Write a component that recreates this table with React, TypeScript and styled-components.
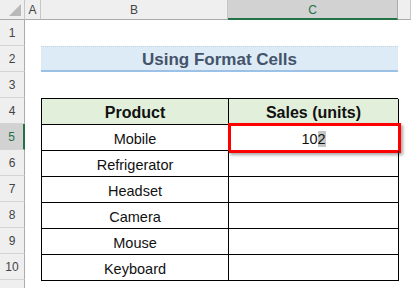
import React from 'react'
import styled, { createGlobalStyle, css } from 'styled-components'

const GlobalStyle = createGlobalStyle`
    html, body {
        margin: 0;
        padding: 0;
        background: #fff;
        overflow: hidden;
    }
    body {
        font-family: 'Liberation Sans', Arial, sans-serif;
    }
`

const ROW_H = 26
const COLS = ['A', 'B', 'C', 'D']
const ROWS = [1, 2, 3, 4, 5, 6, 7, 8, 9, 10, 11]

const Sheet = styled.div`
    display: grid;
    grid-template-columns: 25px 16px 187px 170px 13px;
    grid-template-rows: 20px repeat(11, ${ROW_H}px);
    width: 411px;
    height: 288px;
    overflow: hidden;
    background: #fff;
`

const Corner = styled.div`
    grid-column: 1;
    grid-row: 1;
    display: flex;
    align-items: flex-end;
    justify-content: flex-end;
    padding: 0 3px 3px 0;
    background: #efefef;
    border-right: 1px solid #c6c6c6;
    border-bottom: 1px solid #ababab;
    box-sizing: border-box;
`

const ColHeader = styled.div<{ $col: number; $active?: boolean }>`
    grid-column: ${(p) => p.$col + 2};
    grid-row: 1;
    display: flex;
    align-items: center;
    justify-content: center;
    font-size: 12px;
    color: #444;
    background: #efefef;
    border-right: 1px solid #c6c6c6;
    border-bottom: 1px solid #ababab;
    box-sizing: border-box;
    padding-top: 1px;
    ${(p) =>
        p.$active &&
        css`
            background: #d2d2d2;
            color: #217346;
            border-bottom: 2px solid #217346;
            border-right-color: #ababab;
        `}
`

const RowHeader = styled.div<{ $row: number; $active?: boolean }>`
    grid-column: 1;
    grid-row: ${(p) => p.$row + 1};
    display: flex;
    align-items: center;
    justify-content: center;
    font-size: 12px;
    color: #444;
    background: #efefef;
    border-right: 1px solid #ababab;
    border-bottom: 1px solid #d4d4d4;
    box-sizing: border-box;
    padding-top: 1px;
    ${(p) =>
        p.$active &&
        css`
            background: #d2d2d2;
            color: #217346;
            border-right: 2px solid #217346;
        `}
`

const Title = styled.div`
    grid-column: 3 / 5;
    grid-row: 3;
    display: flex;
    align-items: center;
    justify-content: center;
    background: #ddebf7;
    border-top: 1px dotted #c5d3e0;
    border-bottom: 2px solid #9bc2e6;
    box-sizing: border-box;
    font-size: 17px;
    font-weight: bold;
    color: #44546a;
    padding-top: 3px;
`

const Table = styled.div`
    grid-column: 3 / 5;
    grid-row: 5 / 12;
    display: grid;
    grid-template-columns: 187px 170px;
    grid-template-rows: repeat(7, ${ROW_H}px);
    border-top: 1px solid #000;
    border-left: 1px solid #000;
    box-sizing: border-box;
    height: ${ROW_H * 7 + 1}px;
`

const Cell = styled.div<{ $head?: boolean }>`
    position: relative;
    display: flex;
    align-items: center;
    justify-content: center;
    border-right: 1px solid #000;
    border-bottom: 1px solid #000;
    font-size: 14.5px;
    color: #111;
    padding-top: 2px;
    ${(p) =>
        p.$head &&
        css`
            background: #e2efda;
            font-weight: bold;
            font-size: 16px;
        `}
`

const Highlight = styled.div`
    position: absolute;
    top: -2px;
    left: -1px;
    right: -3px;
    bottom: -3px;
    border: 3px solid #ff0000;
    box-shadow: 2px 2px 3px rgba(0, 0, 0, 0.35);
    pointer-events: none;
`

const Selected = styled.span`
    background: #c6c6c6;
`

const products = ['Mobile', 'Refrigerator', 'Headset', 'Camera', 'Mouse', 'Keyboard']

const CornerMark = () => (
    <svg width="12" height="12" viewBox="0 0 12 12">
        <polygon points="12,0 12,12 0,12" fill="#b9b9b9" />
    </svg>
)

const App: React.FC = () => {
    return (
        <>
            <GlobalStyle />
            <Sheet>
                <Corner>
                    <CornerMark />
                </Corner>
                {COLS.map((c, i) => (
                    <ColHeader key={c} $col={i} $active={c === 'C'}>
                        {c !== 'D' && c}
                    </ColHeader>
                ))}
                {ROWS.map((r) => (
                    <RowHeader key={r} $row={r} $active={r === 5}>
                        {r <= 10 && r}
                    </RowHeader>
                ))}
                <Title>Using Format Cells</Title>
                <Table>
                    <Cell $head>Product</Cell>
                    <Cell $head>Sales (units)</Cell>
                    {products.map((p, i) => (
                        <React.Fragment key={p}>
                            <Cell>{p}</Cell>
                            <Cell>
                                {i === 0 && (
                                    <>
                                        10<Selected>2</Selected>
                                        <Highlight />
                                    </>
                                )}
                            </Cell>
                        </React.Fragment>
                    ))}
                </Table>
            </Sheet>
        </>
    )
}

export default App
